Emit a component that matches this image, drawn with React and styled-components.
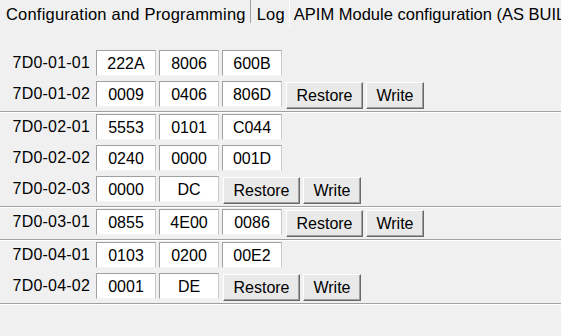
import styled, { createGlobalStyle } from "styled-components"

const Global = createGlobalStyle`
    html, body {
        margin: 0;
        padding: 0;
        background: #f0f0f0;
        font-family: "Liberation Sans", Arial, sans-serif;
        color: #000;
    }
`

const Page = styled.div`
    width: 561px;
    height: 336px;
    overflow: hidden;
    background: #f0f0f0;
`

const TabBar = styled.div`
    display: flex;
    height: 26px;
    white-space: nowrap;
    overflow: hidden;
`

const Tab = styled.div`
    height: ${({active}) => (active ? "26px" : "23px")};
    padding: ${({active}) => (active ? "0 0 0 4px" : "0 4px 0 6px")};
    line-height: 28px;
    font-size: 16.5px;
    letter-spacing: ${({active}) => (active ? "0" : "0.2px")};
    border-right: ${({last}) => (last ? "1px solid #a0a0a0" : "none")};
    border-left: ${({active}) => (active ? "1px solid #ffffff" : "none")};
    box-sizing: border-box;
`

const Content = styled.div`
    padding-top: 22px;
`

const Group = styled.div`
    padding-bottom: 1px;
    border-bottom: 1px solid #a0a0a0;
    box-shadow: 0 1px 0 #ffffff;
`

const Row = styled.div`
    display: flex;
    align-items: flex-start;
    gap: 3px;
    height: 31px;
    padding-top: 2px;
    box-sizing: border-box;
`

const Label = styled.div`
    width: 90px;
    margin-right: 3px;
    height: 26px;
    line-height: 26px;
    text-align: right;
    font-size: 16px;
    letter-spacing: 0.2px;
`

const Cell = styled.div`
    width: 60px;
    height: 26px;
    box-sizing: border-box;
    background: #ffffff;
    border-top: 1px solid #a0a0a0;
    border-left: 1px solid #a0a0a0;
    border-right: 1px solid #c8c8c8;
    border-bottom: 1px solid #f4f4f4;
    text-align: center;
    line-height: 25px;
    font-size: 16px;
`

const Button = styled.div`
    width: ${({w}) => w}px;
    height: 27px;
    margin-top: 1px;
    margin-left: ${({first}) => (first ? "1px" : "0")};
    box-sizing: border-box;
    background: #e9e9e9;
    border-top: 1px solid #ffffff;
    border-left: 1px solid #ffffff;
    border-right: 1px solid #696969;
    border-bottom: 1px solid #696969;
    box-shadow: inset -1px -1px 0 #a0a0a0;
    text-align: center;
    line-height: 26px;
    font-size: 16px;
`

const groups = [
    [
        { id: "7D0-01-01", vals: ["222A", "8006", "600B"] },
        { id: "7D0-01-02", vals: ["0009", "0406", "806D"], btn: true },
    ],
    [
        { id: "7D0-02-01", vals: ["5553", "0101", "C044"] },
        { id: "7D0-02-02", vals: ["0240", "0000", "001D"] },
        { id: "7D0-02-03", vals: ["0000", "DC"], btn: true },
    ],
    [
        { id: "7D0-03-01", vals: ["0855", "4E00", "0086"], btn: true },
    ],
    [
        { id: "7D0-04-01", vals: ["0103", "0200", "00E2"] },
        { id: "7D0-04-02", vals: ["0001", "DE"], btn: true },
    ],
]

export default function App() {
    return (
        <Page>
            <Global />
            <TabBar>
                <Tab last>Configuration and Programming</Tab>
                <Tab>Log</Tab>
                <Tab active>APIM Module configuration (AS BUILT)</Tab>
            </TabBar>
            <Content>
                {groups.map((rows, gi) => (
                    <Group key={gi}>
                        {rows.map((r) => (
                            <Row key={r.id}>
                                <Label>{r.id}</Label>
                                {r.vals.map((v, i) => <Cell key={i}>{v}</Cell>)}
                                {r.btn && <Button first w={77}>Restore</Button>}
                                {r.btn && <Button w={58}>Write</Button>}
                            </Row>
                        ))}
                    </Group>
                ))}
            </Content>
        </Page>
    )
}
